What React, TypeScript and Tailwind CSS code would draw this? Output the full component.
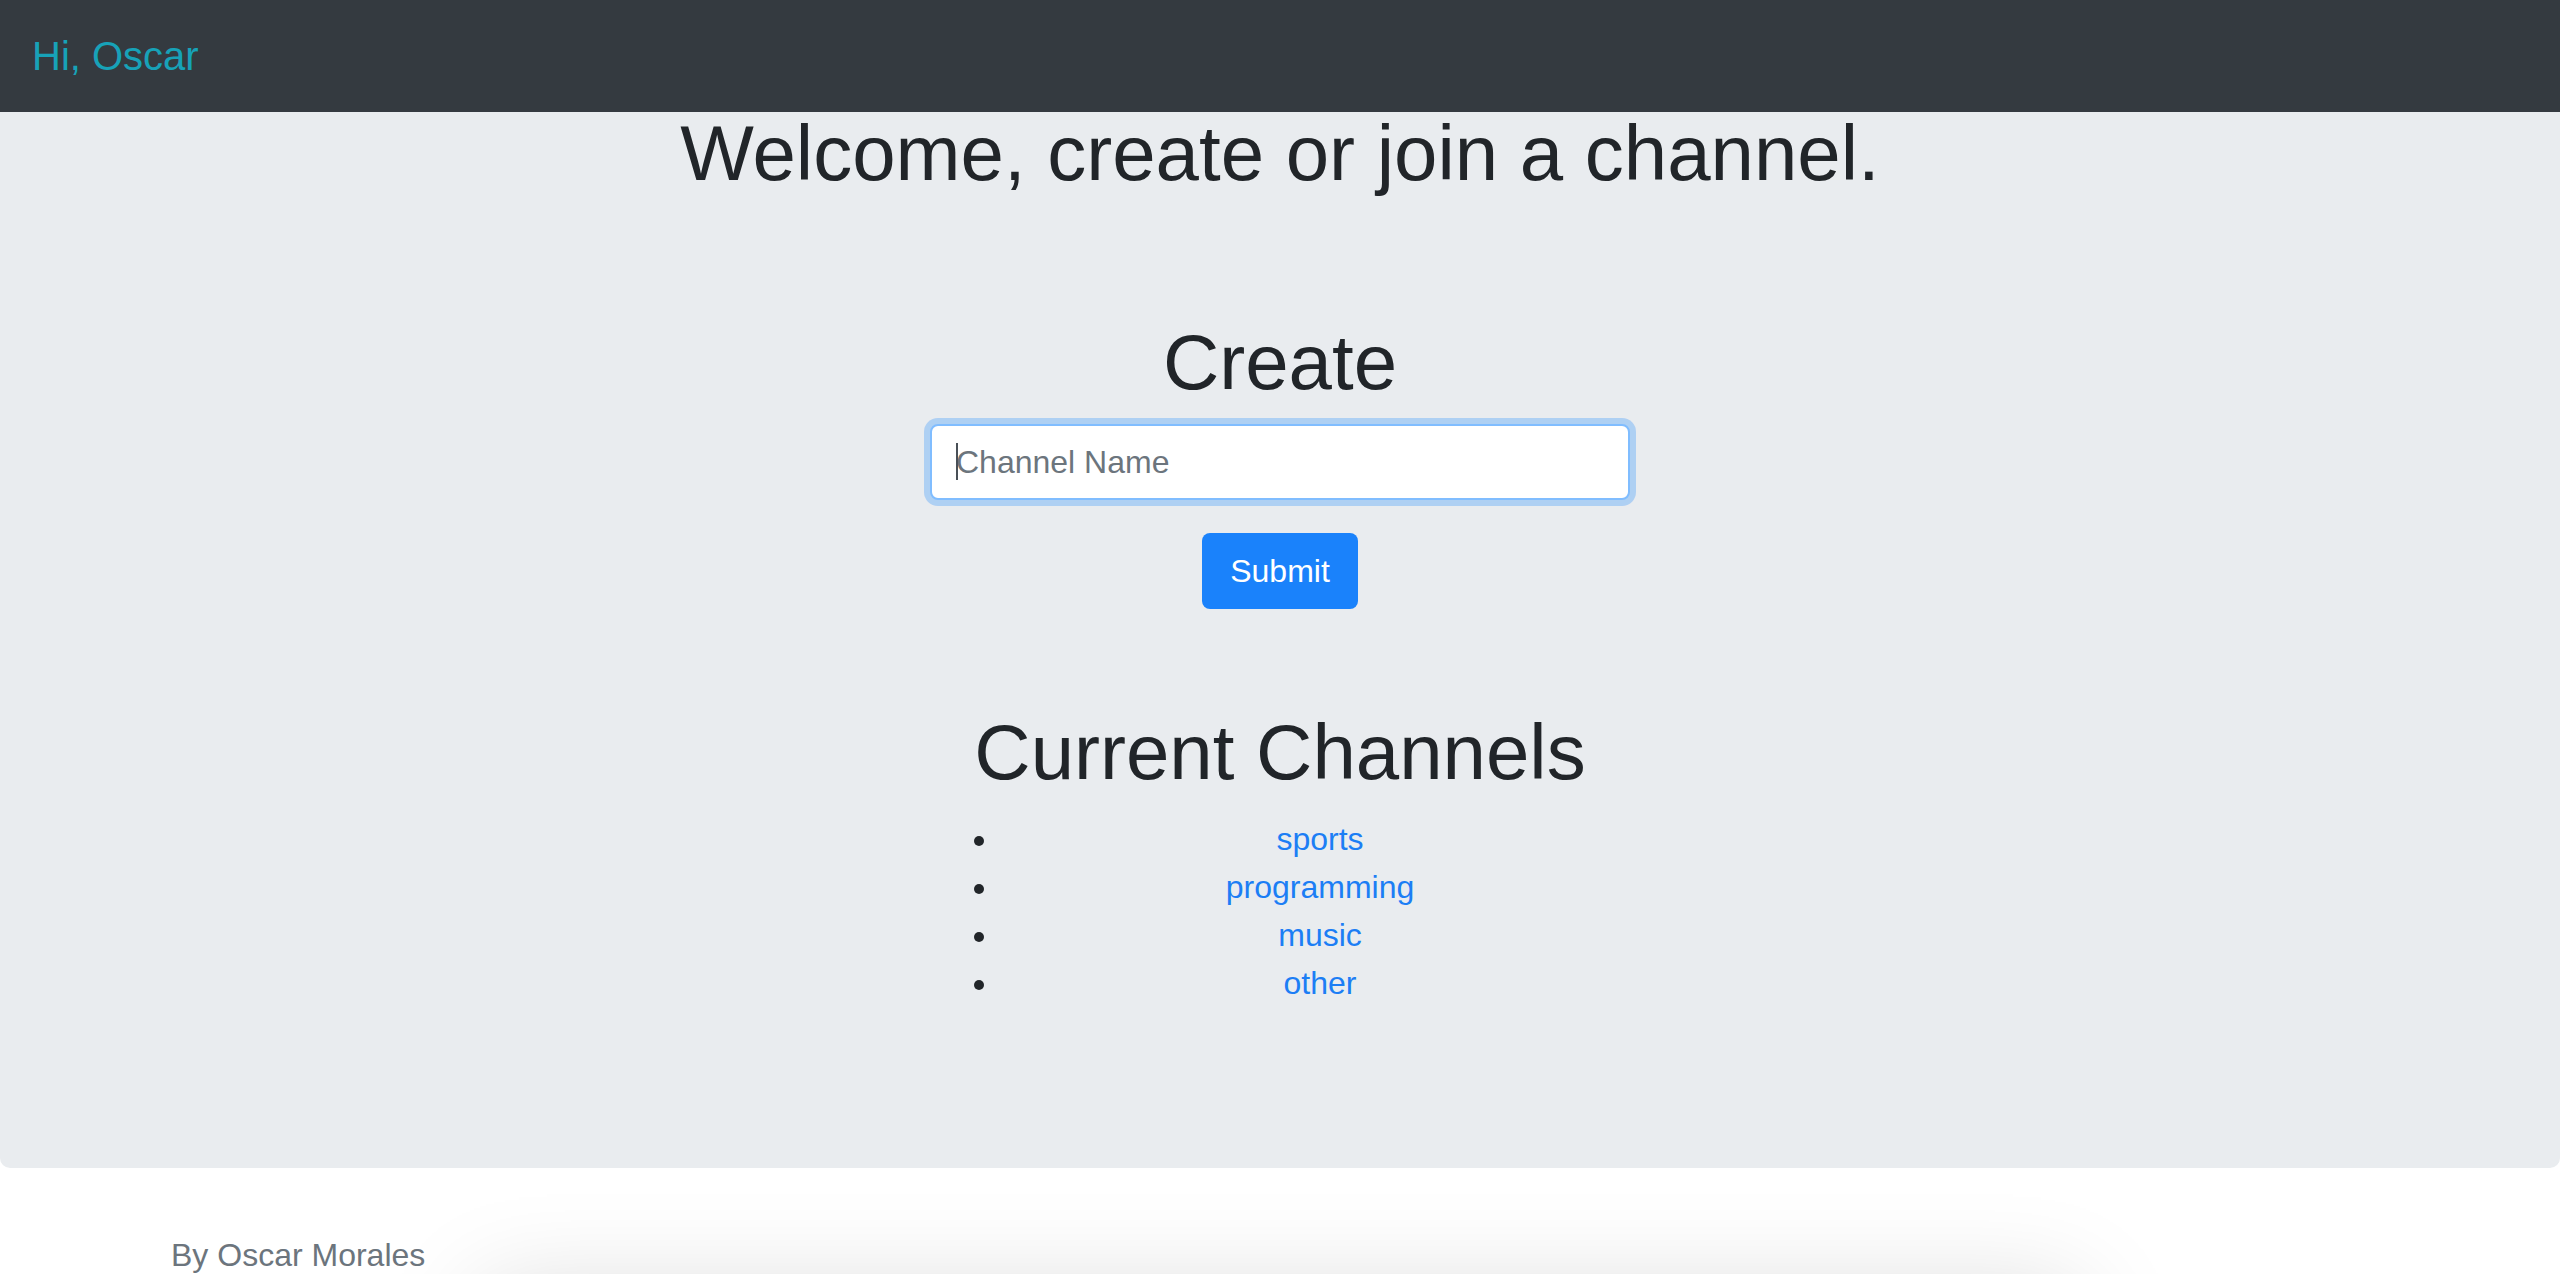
export default function App() {
  const channels = ['sports', 'programming', 'music', 'other']

  return (
    <div className="min-h-screen bg-white font-['Liberation_Sans',Arial,sans-serif] text-[#212529]">
      {/* Navbar */}
      <nav className="flex h-[112px] items-center bg-[#343a40] px-[32px]">
        <a href="#" className="text-[40px] leading-[60px] text-[#17a2b8]">
          Hi, Oscar
        </a>
      </nav>

      {/* Jumbotron */}
      <main className="rounded-b-[10px] bg-[#e9ecef] pb-[161px] text-center">
        <h1 className="text-[78px] leading-[82px] font-normal">
          Welcome, create or join a channel.
        </h1>

        <h1 className="mt-[120px] text-[78px] leading-[96px] font-normal">Create</h1>
        <form className="mt-[14px] flex flex-col items-center" onSubmit={(e) => e.preventDefault()}>
          <div className="relative">
            <input
              type="text"
              placeholder="Channel Name"
              className="block h-[76px] w-[700px] rounded-[8px] border-2 border-[#80bdff] bg-white px-[24px] text-[32px] text-[#495057] shadow-[0_0_0_6px_rgba(0,123,255,0.25)] outline-none placeholder:text-[#6c757d]"
            />
            <span className="absolute left-[26px] top-[19px] h-[37px] w-[2px] bg-[#495057]" />
          </div>
          <button
            type="submit"
            className="mt-[33px] h-[76px] w-[156px] rounded-[8px] bg-[#1a82fb] text-[32px] text-white"
          >
            Submit
          </button>
        </form>

        <h1 className="mt-[95px] text-[78px] leading-[96px] font-normal">Current Channels</h1>
        <ul className="mx-auto mt-[15px] w-[720px] list-disc pl-[80px] text-left">
          {channels.map((name) => (
            <li key={name} className="text-center text-[32px] leading-[48px]">
              <a href="#" className="text-[#1c7ef5]">
                {name}
              </a>
            </li>
          ))}
        </ul>
      </main>

      {/* Footer */}
      <footer className="mt-[63px]">
        <p className="pl-[171px] text-[32px] leading-[48px] text-[#6c757d]">By Oscar Morales</p>
        <div className="mx-auto mt-[12px] h-[400px] w-[1600px] bg-white shadow-[0_0_96px_rgba(0,0,0,0.15)]" />
      </footer>
    </div>
  )
}
